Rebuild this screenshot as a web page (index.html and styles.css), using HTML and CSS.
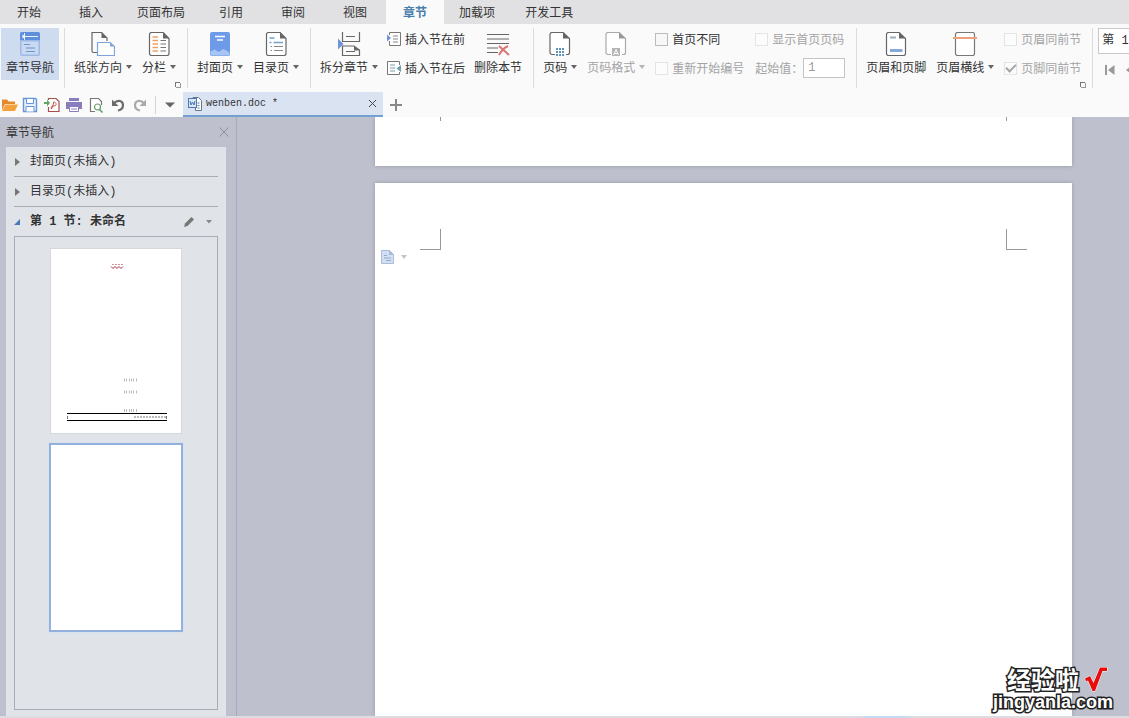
FILE: index.html
```html
<!DOCTYPE html>
<html lang="zh-CN">
<head>
<meta charset="utf-8">
<title>wenben.doc</title>
<link rel="stylesheet" href="styles.css">
</head>
<body>
<div class="app">
  <nav class="menu">
    <button class="menu-tab">开始</button>
    <button class="menu-tab">插入</button>
    <button class="menu-tab wide">页面布局</button>
    <button class="menu-tab">引用</button>
    <button class="menu-tab">审阅</button>
    <button class="menu-tab">视图</button>
    <button class="menu-tab active">章节</button>
    <button class="menu-tab wide">加载项</button>
    <button class="menu-tab wide">开发工具</button>
  </nav>

  <div class="ribbon">
    <div class="group first">
      <button class="big selected">
        <svg width="24" height="24" viewBox="0 0 24 24"><rect x="2" y="0" width="20" height="24" rx="2" fill="#9db9e6"/><path d="M2 2a2 2 0 0 1 2-2h16a2 2 0 0 1 2 2v6H2z" fill="#5f8fdc"/><path d="M6.500 1v7M6.500 4.500H20" stroke="#e8f0fc" stroke-width="1"/><path d="M4.500 2.500l3 2-3 2z" fill="#fff"/><rect x="3.500" y="9.500" width="17" height="13" fill="#c9d9f1"/><path d="M6 12.500h6M8 16h9M8 19.500h9" stroke="#6f96d2" stroke-width="1.200"/></svg>
        <span class="label">章节导航</span>
      </button>
    </div>

    <div class="group">
      <button class="big">
        <svg width="24" height="24" viewBox="0 0 24 24"><path d="M6 20.500H2.500a1.500 1.500 0 0 1-1.500-1.500V.500h9.500L16 6v3" fill="none" stroke="#666" stroke-width="1.200"/><path d="M10.500 0v6H16z" fill="#666"/><path d="M6.500 10.500h12.500l4.500 4v9h-17z" fill="#fff" stroke="#7da5dd" stroke-width="1.200"/><path d="M19 10.500v4h4.500z" fill="#7da5dd"/></svg>
        <span class="label">纸张方向<i class="caret"></i></span>
      </button>
      <button class="big">
        <svg width="24" height="24" viewBox="0 0 24 24"><path d="M4.500.500H16L22 6.500V21.500a2 2 0 0 1-2 2H4.500a2 2 0 0 1-2-2V2.500a2 2 0 0 1 2-2z" fill="#fff" stroke="#666" stroke-width="1.200"/><path d="M16 0v6.500h6z" fill="#666"/><path d="M5.500 5h5.500M5.500 8.500h5.500M5.500 12h5.500M5.500 15.500h5.500M5.500 19h5.500" stroke="#f0a064" stroke-width="1.500"/><path d="M13.500 8.500H19M13.500 12H19M13.500 15.500H19M13.500 19H19" stroke="#777" stroke-width="1.200"/></svg>
        <span class="label">分栏<i class="caret"></i></span>
      </button>
      <i class="launcher"></i>
    </div>

    <div class="group">
      <button class="big">
        <svg width="24" height="24" viewBox="0 0 24 24"><rect x="2" y="0" width="20" height="24" rx="2" fill="#6d9be8"/><path d="M7 4.500h10M9 8h6" stroke="#fff" stroke-width="1.300"/><path d="M2.500 19.500l4-2 4 2.500 5-3 6 3.500V22a2 2 0 0 1-2 1.500h-15a2 2 0 0 1-2-1.500z" fill="#a9c5f3"/></svg>
        <span class="label">封面页<i class="caret"></i></span>
      </button>
      <button class="big">
        <svg width="24" height="24" viewBox="0 0 24 24"><path d="M4.500.500H16L22 6.500V21.500a2 2 0 0 1-2 2H4.500a2 2 0 0 1-2-2V2.500a2 2 0 0 1 2-2z" fill="#fff" stroke="#666" stroke-width="1.200"/><path d="M16 0v6.500h6z" fill="#666"/><path d="M5.500 6h5M5.500 10.500h2M9.500 10.500H19" stroke="#77a0cc" stroke-width="1.400"/><path d="M6.500 14.500h1.500M10 14.500h9M6.500 18.500h1.500M10 18.500h9" stroke="#888" stroke-width="1.200"/></svg>
        <span class="label">目录页<i class="caret"></i></span>
      </button>
    </div>

    <div class="group tight">
      <button class="big">
        <svg width="24" height="24" viewBox="0 0 24 24"><path d="M5.500 0v9.500h17V0M9 4.500h9M5.500 23.500V14h11.500l5.500 4v5.500zM9 19.500h9" fill="none" stroke="#666" stroke-width="1.200"/><path d="M17 14v4.500h5.500z" fill="#666"/><path d="M1 6.500v11l5.500-5.500z" fill="#6d93d8"/></svg>
        <span class="label">拆分章节<i class="caret"></i></span>
      </button>
      <div class="stack">
        <button class="small"><svg width="14" height="16" viewBox="0 0 14 16"><path d="M2.500 4V1.500h11v13h-11V10" fill="#fff" stroke="#777"/><path d="M6 5h5M6 8h5M6 11h5" stroke="#888"/><path d="M0 3.500v7L4 7z" fill="#6d93d8"/></svg>插入节在前</button>
        <button class="small"><svg width="14" height="16" viewBox="0 0 14 16"><path d="M12.500 5V1.500H.500v13h12V12" fill="#fff" stroke="#777"/><path d="M3 5h5M3 8h5M3 11h5" stroke="#789cac"/><path d="M14 5v7L9.500 8.500z" fill="#6f9fae"/></svg>插入节在后</button>
      </div>
      <button class="big">
        <svg width="24" height="24" viewBox="0 0 24 24"><path d="M1 2.500h22M1 7h22M1 11.500h22M1 16h11M1 20.500h11" stroke="#666" stroke-width="1.200"/><path d="M13 14l10 9M22 14c-4 2-7 5-9 9" stroke="#dc7474" stroke-width="2" fill="none"/></svg>
        <span class="label">删除本节</span>
      </button>
    </div>

    <div class="group">
      <button class="big">
        <svg width="24" height="24" viewBox="0 0 24 24"><path d="M7 22.500H4a2 2 0 0 1-2-2V2.500a2 2 0 0 1 2-2h11l6.500 6v14a2 2 0 0 1-2 2H18" fill="#fff" stroke="#666" stroke-width="1.200"/><path d="M15 0v6.500h6.500z" fill="#666"/><rect x="8" y="16" width="8" height="8" fill="#5e93bd"/><path d="M8 18.500h8M8 21.500h8M10.500 16v8M13.500 16v8" stroke="#fff"/></svg>
        <span class="label">页码<i class="caret"></i></span>
      </button>
      <button class="big" disabled>
        <svg width="24" height="24" viewBox="0 0 24 24"><path d="M7 22.500H4a2 2 0 0 1-2-2V2.500a2 2 0 0 1 2-2h11l6.500 6v14a2 2 0 0 1-2 2H18" fill="#fff" stroke="#aaa" stroke-width="1.200"/><path d="M15 0v6.500h6.500z" fill="#999"/><rect x="8" y="16" width="8" height="8" fill="#b5b5b5"/><path d="M9.500 23l2.500-5.500 2.500 5.500M10.500 21.500h3" stroke="#fff" fill="none"/></svg>
        <span class="label">页码格式<i class="caret"></i></span>
      </button>
      <div class="options">
        <label class="check"><input type="checkbox">首页不同</label>
        <label class="check off"><input type="checkbox" disabled>显示首页页码</label>
        <label class="check off"><input type="checkbox" disabled>重新开始编号</label>
        <label class="start off">起始值：<input type="text" value="1" disabled></label>
      </div>
    </div>

    <div class="group">
      <button class="big">
        <svg width="24" height="24" viewBox="0 0 24 24"><path d="M4.500.500H15L21.500 6.500V21.500a2 2 0 0 1-2 2H4.500a2 2 0 0 1-2-2V2.500a2 2 0 0 1 2-2z" fill="#fff" stroke="#666" stroke-width="1.200"/><path d="M15 0v6.500h6.500z" fill="#666"/><path d="M6 5.500h6" stroke="#9aabc0" stroke-width="2"/><path d="M6 18.500h12.500" stroke="#85a9dc" stroke-width="3"/></svg>
        <span class="label">页眉和页脚</span>
      </button>
      <button class="big">
        <svg width="24" height="24" viewBox="0 0 24 24"><rect x="2.500" y=".500" width="19" height="23" rx="2" fill="#fff" stroke="#777" stroke-width="1.200"/><path d="M0 6h24" stroke="#eba27a" stroke-width="2"/></svg>
        <span class="label">页眉横线<i class="caret"></i></span>
      </button>
      <div class="stack">
        <label class="check off"><input type="checkbox" disabled>页眉同前节</label>
        <label class="check off"><input type="checkbox" checked disabled>页脚同前节</label>
      </div>
      <i class="launcher"></i>
    </div>

    <div class="group last">
      <select class="section-select" aria-label="节"><option>第 1 节</option></select>
      <div class="pager">
        <button aria-label="第一节"><svg width="12" height="12" viewBox="0 0 12 12"><path d="M1 1h2v10H1zM10.500 1v10L4 6z" fill="#999"/></svg></button>
        <button aria-label="上一节"><svg width="12" height="12" viewBox="0 0 12 12"><path d="M7 1v10L0 6z" fill="#999"/></svg></button>
      </div>
    </div>
  </div>

  <div class="files">
    <div class="quick">
      <button class="first-tool" aria-label="打开"><svg width="16" height="16" viewBox="0 0 16 16"><path d="M0 2.500h5l1.500 2H13V7H3L0 13z" fill="#e58a2c"/><path d="M3.500 7.500H16L13 14H0z" fill="#f6a23c"/></svg></button>
      <button aria-label="保存"><svg width="16" height="16" viewBox="0 0 16 16"><path d="M1.500 1.500h12l1 1v12h-13z" fill="#e6f0fb" stroke="#6595d6" stroke-width="1.400"/><path d="M4.500 2v4.500h7V2M4 14.500v-5h8v5" fill="#fff" stroke="#6595d6"/></svg></button>
      <button aria-label="输出为PDF"><svg width="16" height="16" viewBox="0 0 16 16"><path d="M4.500 3V1.500h7.500l3 3v10H4.500V10" fill="#fff" stroke="#a65050" stroke-width="1.200"/><path d="M7.500 12c1-2 2-4 2-7 3 0 4 4 0 4-2 0-3 1-2 3z" fill="none" stroke="#d04848"/><path d="M0 5h3V2.500L6 6 3 9.500V7H0z" fill="#62a862"/></svg></button>
      <button aria-label="打印"><svg width="16" height="16" viewBox="0 0 16 16"><path d="M3 1h10v3H3zM0 5h16v7H0z" fill="#8a7dbd"/><path d="M3.500 9.500h9v5h-9z" fill="#fff" stroke="#8a7dbd"/><path d="M5 12h6" stroke="#8a7dbd"/></svg></button>
      <button aria-label="打印预览"><svg width="16" height="16" viewBox="0 0 16 16"><path d="M7 14.500H2.500v-13h8l3 3V8" fill="#fff" stroke="#777" stroke-width="1.200"/><circle cx="9.500" cy="10" r="3" fill="#fff" stroke="#64a06c" stroke-width="1.200"/><path d="M11.500 12.500l3 3" stroke="#64a06c" stroke-width="1.600"/></svg></button>
      <button aria-label="撤销"><svg width="16" height="16" viewBox="0 0 16 16"><path d="M4 6c4-4 9-2 9 2 0 3-2 5-5 5.500" fill="none" stroke="#6b6b6b" stroke-width="2.200"/><path d="M2 2.500V9h6.500z" fill="#6b6b6b"/></svg></button>
      <button aria-label="恢复"><svg width="16" height="16" viewBox="0 0 16 16"><path d="M12 6C8 2 3 4 3 8c0 3 2 5 5 5.500" fill="none" stroke="#aaa" stroke-width="2.200"/><path d="M14 2.500V9H7.500z" fill="#aaa"/></svg></button>
      <span class="divider"></span>
      <button aria-label="更多"><svg width="10" height="6" viewBox="0 0 10 6"><path d="M0 .500h10L5 5.500z" fill="#666"/></svg></button>
    </div>
    <div class="file-tab">
      <svg width="14" height="14" viewBox="0 0 14 14"><path d="M5 1.500V.500h5.500l3 3v10h-6V11" fill="#fff" stroke="#66758c"/><rect x=".500" y="1.500" width="8" height="9" fill="#dce8f8" stroke="#4f79b5"/><path d="M2 4l1 4 1.500-3L6 8l1-4" fill="none" stroke="#4672b0"/><path d="M9.500 6h2M9.500 8.500h2M9.500 11h2" stroke="#66758c"/></svg>
      <span class="file-name">wenben.doc *</span>
      <button class="file-close" aria-label="关闭"><svg width="9" height="9" viewBox="0 0 9 9"><path d="M1 1l7 7M8 1L1 8" stroke="#444"/></svg></button>
    </div>
    <button class="new-tab" aria-label="新建"><svg width="12" height="12" viewBox="0 0 12 12"><path d="M6 0v12M0 6h12" stroke="#888" stroke-width="2"/></svg></button>
  </div>

  <div class="work">
    <aside class="side">
      <header class="side-head">章节导航
        <button aria-label="关闭"><svg width="10" height="10" viewBox="0 0 10 10"><path d="M.500.500l9 9M9.500.500l-9 9" stroke="#8d9099"/></svg></button>
      </header>
      <div class="panel">
        <button class="node"><svg width="6" height="8" viewBox="0 0 6 8"><path d="M1 0v8l5-4z" fill="#777"/></svg>封面页(未插入)</button>
        <button class="node"><svg width="6" height="8" viewBox="0 0 6 8"><path d="M1 0v8l5-4z" fill="#777"/></svg>目录页(未插入)</button>
        <div class="node open">
          <svg width="6" height="6" viewBox="0 0 6 6"><path d="M6 0v6H0z" fill="#4a79b8"/></svg>
          <span>第 1 节: 未命名</span>
          <span class="tools">
            <button aria-label="重命名"><svg width="11" height="11" viewBox="0 0 11 11"><path d="M0 11l1-3.500L7.500 1 10 3.500 3.500 10z" fill="#777"/></svg></button>
            <button aria-label="菜单"><svg width="6" height="4" viewBox="0 0 6 4"><path d="M0 0h6L3 3.500z" fill="#888"/></svg></button>
          </span>
        </div>
        <div class="thumbs">
          <div class="thumb">
            <svg viewBox="0 0 130 184"><path d="M61 15.500h11" stroke="#c99" stroke-dasharray="2 1"/><path d="M60 17.500l2 2 2-2 2 2 2-2 2 2 2-2" fill="none" stroke="#b03048"/><path d="M73 131h4M78 131h5M85 131h2M73 143h4M78 143h5M85 143h2M73 161.500h4M78 161.500h5M85 161.500h2" stroke="#bbb" stroke-width="3" stroke-dasharray="1 1"/><path d="M16 164.500h100M16 171.500h100" stroke="#000"/><path d="M83 168h32" stroke="#bbb" stroke-width="2" stroke-dasharray="2 1"/><path d="M16.500 167v3M115.500 167v3" stroke="#777"/></svg>
          </div>
          <div class="thumb current"></div>
        </div>
      </div>
    </aside>

    <main class="canvas">
      <section class="page previous"><i class="tick"></i><i class="tick"></i></section>
      <section class="page">
        <div class="corners"><i class="corner left"></i><i class="corner right"></i></div>
        <button class="page-tool" aria-label="章节选项"><svg width="13" height="14" viewBox="0 0 13 14"><path d="M.500.500h8l4 4v9H.500z" fill="#d3dff0" stroke="#a9bddb"/><path d="M8 0v5h5z" fill="#a9bddb"/><path d="M3 5.500h3M3 8h7M5 10.500h5" stroke="#8fabd2"/></svg><i class="caret"></i></button>
      </section>
      <div class="watermark">
        <div class="brand">经验啦<svg width="24" height="26" viewBox="0 0 24 26"><path d="M1 12.500L6 10l3.500 7L16 1.500h7V5h-4.500L11 25H8.500L4 14.500l-2 1z" fill="#e80c0c" stroke="#fff" stroke-width="1"/></svg></div>
        <div class="domain">jingyanla.com</div>
      </div>
    </main>
  </div>
  <footer class="status"></footer>
</div>
</body>
</html>
```

FILE: styles.css
```css
* {
  box-sizing: border-box;
}

body {
  margin: 0;
  font: 12px/16px "Noto Sans CJK SC", sans-serif;
  color: #333;
}

button {
  margin: 0;
  padding: 0;
  border: 0;
  background: none;
  font: inherit;
  color: inherit;
  white-space: nowrap;
}

svg {
  display: block;
  flex: none;
}

.app {
  display: flex;
  flex-direction: column;
  height: 100vh;
  overflow: hidden;
  background: #fafafb;
}

/* Menu tabs */
.menu {
  display: flex;
  flex: none;
  height: 24px;
  background: #e1e1e3;
}

.menu-tab {
  padding: 0 19px;
}

.menu-tab:first-child {
  padding-left: 17px;
}

.menu-tab.wide {
  padding: 0 15px;
}

.menu-tab.active {
  padding: 0 17px;
  background: #fafafb;
  color: #4a7fae;
  font-weight: bold;
}

/* Ribbon */
.ribbon {
  display: flex;
  flex: none;
  height: 66px;
  padding-top: 4px;
  overflow: hidden;
}

.group {
  position: relative;
  display: flex;
  flex: none;
  gap: 10px;
  height: 60px;
  padding: 0 11px 0 9px;
  border-right: 1px solid #dcdcde;
}

.group.first {
  padding: 0 5px 0 1px;
}

.group.tight {
  gap: 9px;
}

.group.last {
  flex-direction: column;
  gap: 10px;
  padding: 0 0 0 5px;
  border: 0;
}

.big {
  display: flex;
  flex-direction: column;
  align-items: center;
  gap: 3px;
  height: 52px;
  padding-top: 4px;
}

.big.selected {
  padding: 4px 5px 0;
  background: #cfdcf0;
}

.label {
  display: flex;
  align-items: center;
  gap: 4px;
}

.caret {
  width: 6px;
  border: 3px solid transparent;
  border-top: 4px solid #666;
  border-bottom: 0;
}

.big:disabled {
  color: #a3a3a3;
}

.big:disabled .caret {
  border-top-color: #b5b5b5;
}

.stack,
.options {
  display: grid;
  grid-auto-rows: 20px;
  row-gap: 9px;
  align-content: start;
  padding-top: 1px;
}

.options {
  grid-template-columns: auto auto;
  column-gap: 11px;
}

.small,
.check {
  display: flex;
  align-items: center;
  gap: 4px;
  white-space: nowrap;
}

.off {
  color: #a3a3a3;
}

.check input {
  appearance: none;
  display: grid;
  place-items: center;
  width: 13px;
  height: 13px;
  margin: 0;
  border: 1px solid #bbb;
  background: #f7f7f7;
}

.check input:disabled {
  border-color: #e4e4e4;
  background: #fcfcfc;
}

.check input:checked::after {
  content: "";
  width: 8px;
  height: 4px;
  margin-bottom: 3px;
  border: solid #a5a5a5;
  border-width: 0 0 2px 2px;
  transform: rotate(-45deg);
}

.start {
  display: flex;
  align-items: center;
  white-space: nowrap;
}

.start input {
  width: 42px;
  height: 20px;
  margin: 0;
  padding: 0 4px;
  border: 1px solid #c4c4c6;
  background: #fff;
  font: 12px/16px "Liberation Mono", monospace;
  color: #999;
}

.launcher {
  position: absolute;
  right: 7px;
  bottom: 1px;
  width: 5px;
  height: 5px;
  border: solid #777;
  border-width: 1px 0 0 1px;
  box-shadow: 1px 1px 0 #999;
}

.section-select {
  appearance: none;
  width: 80px;
  height: 26px;
  padding: 0 3px;
  border: 1px solid #c8c8ca;
  border-radius: 0;
  background: #fff;
  font: 12px/16px "Liberation Mono", "Noto Sans CJK SC", monospace;
  color: #333;
}

.pager {
  display: flex;
  gap: 10px;
  padding-left: 6px;
}

/* Quick access and document tabs */
.files {
  display: flex;
  flex: none;
  height: 27px;
  padding-top: 2px;
}

.quick {
  display: flex;
  flex: none;
  align-items: center;
  width: 183px;
}

.quick button {
  display: flex;
  justify-content: center;
  width: 22px;
}

.quick .first-tool {
  width: 19px;
}

.divider {
  width: 1px;
  height: 18px;
  margin: 0 3px 0 4px;
  background: #d5d5d7;
}

.file-tab {
  display: flex;
  align-items: center;
  gap: 4px;
  width: 200px;
  padding: 0 6px 0 5px;
  border-bottom: 2px solid #75a0d4;
  background: #d9e3f2;
}

.file-name {
  flex: 1;
  font: 10px/16px "Liberation Mono", monospace;
}

.new-tab {
  padding: 0 7px;
}

/* Work area */
.work {
  display: flex;
  flex: 1;
  min-height: 0;
  background: #bec1cd;
}

.side {
  display: flex;
  flex: none;
  flex-direction: column;
  width: 237px;
  padding: 0 10px 0 6px;
  border-right: 1px solid #a9acb8;
}

.side-head {
  display: flex;
  flex: none;
  align-items: center;
  justify-content: space-between;
  height: 30px;
}

.side-head button {
  margin-right: -3px;
}

.panel {
  display: flex;
  flex: 1;
  flex-direction: column;
  min-height: 0;
  padding: 0 8px 6px;
  background: #e0e4e9;
  font-family: "Liberation Mono", "Noto Sans CJK SC", monospace;
}

.node {
  display: flex;
  flex: none;
  align-items: center;
  gap: 10px;
  height: 30px;
  border-bottom: 1px solid #a9adb7;
  white-space: nowrap;
}

.node.open {
  height: 29px;
  border: 0;
  font-weight: bold;
}

.tools {
  display: flex;
  flex: 1;
  align-items: center;
  justify-content: flex-end;
  gap: 11px;
  padding-right: 6px;
}

.thumbs {
  display: flex;
  flex: 1;
  flex-direction: column;
  align-items: center;
  gap: 9px;
  min-height: 0;
  padding: 11px 0;
  border: 1px solid #a6abb7;
}

.thumb {
  flex: none;
  width: 132px;
  height: 186px;
  border: 1px solid #d6d8dc;
  background: #fff;
}

.thumb.current {
  width: 134px;
  height: 189px;
  border: 2px solid #94b0de;
  box-shadow: 0 0 3px #cddcf5;
}

/* Document */
.canvas {
  position: relative;
  display: flex;
  flex: 1;
  flex-direction: column;
  gap: 17px;
  min-width: 0;
  padding: 0 57px 0 138px;
  overflow: hidden;
}

.page {
  flex: 1;
  background: #fff;
  box-shadow: 0 0 4px #96989e;
}

.page.previous {
  display: flex;
  flex: none;
  justify-content: space-between;
  height: 49px;
  padding: 0 65px;
}

.tick {
  width: 1px;
  height: 4px;
  background: #999;
}

.corners {
  display: flex;
  justify-content: space-between;
  padding: 46px 45px 0;
}

.corner {
  width: 21px;
  height: 21px;
  border: solid #999;
}

.corner.left {
  border-width: 0 1px 1px 0;
}

.corner.right {
  border-width: 0 0 1px 1px;
}

.page-tool {
  display: flex;
  align-items: center;
  gap: 7px;
  padding-left: 6px;
}

.page-tool .caret {
  border-top-color: #c0c3ca;
}

.watermark {
  position: absolute;
  right: 16px;
  bottom: 4px;
  color: #fff;
  -webkit-text-stroke: 3px #222;
  paint-order: stroke fill;
  text-align: right;
}

.brand {
  display: flex;
  align-items: center;
  justify-content: flex-end;
  gap: 5px;
  padding-right: 5px;
  font: bold 24px/26px "Noto Sans CJK SC", sans-serif;
}

.domain {
  font: bold 18px/20px "Liberation Sans", sans-serif;
}

.status {
  flex: none;
  height: 2px;
  background: linear-gradient(90deg, #dcdde0 76%, #c5d9f2 77%, #c5d9f2 80%, #dcdde0 81%);
}
```
